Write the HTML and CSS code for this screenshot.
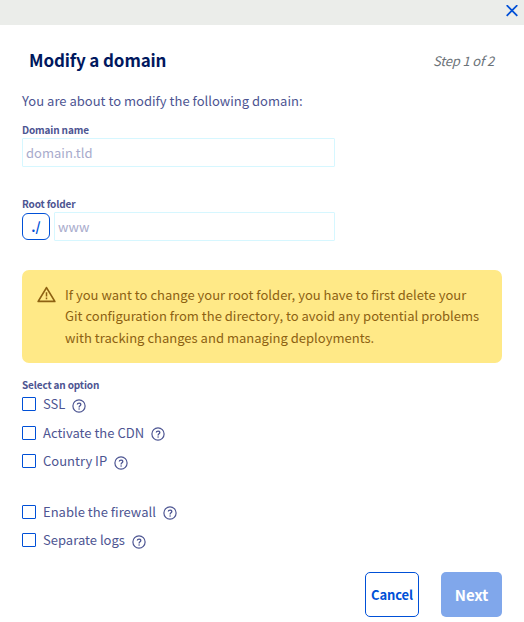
FILE: index.html
```html
<!DOCTYPE html>
<html lang="en">
<head>
<meta charset="utf-8">
<title>Modify a domain</title>
<link rel="stylesheet" href="styles.css">
</head>
<body>
<svg class="defs" width="0" height="0" aria-hidden="true">
  <symbol id="help" viewBox="0 0 14 14"><g fill="none" stroke="currentColor"><circle cx="7" cy="7" r="6.1" stroke-width="1.2"/><path d="M5.3 5.5C5.3 3.6 8.8 3.6 8.8 5.4C8.8 6.8 7.1 6.8 7.1 8.4" stroke-width="1.3"/></g><circle cx="7.1" cy="10" r=".8" fill="currentColor"/></symbol>
</svg>
<div class="topbar"><button class="close" aria-label="Close"><svg width="12" height="12" viewBox="0 0 12 12"><path d="M.7.2l10.6 10.6M11.3.2L.7 10.8" stroke="currentColor" stroke-width="1.8"/></svg></button></div>
<main class="content">
  <header class="heading"><h1>Modify a domain</h1><span class="step">Step 1 of 2</span></header>
  <p class="intro">You are about to modify the following domain:</p>
  <section class="field">
    <label class="label" for="domain">Domain name</label>
    <input id="domain" class="input" placeholder="domain.tld">
  </section>
  <section class="field folder">
    <label class="label" for="root">Root folder</label>
    <div class="group"><span class="prefix">./</span><input id="root" class="input" placeholder="www"></div>
  </section>
  <div class="alert">
    <svg class="warning" width="20" height="18" viewBox="0 0 20 18"><path d="M10.5 1.6L2.2 15.4H18.8Z" fill="none" stroke="currentColor" stroke-width="1.7" stroke-linejoin="round"/><path d="M10.5 6.2V10.4M10.5 11.6V13.2" stroke="currentColor" stroke-width="1.5"/></svg>
    <p>If you want to change your root folder, you have to first delete your<br>Git configuration from the directory, to avoid any potential problems<br>with tracking changes and managing deployments.</p>
  </div>
  <section class="options">
    <div class="label">Select an option</div>
    <label class="option"><input type="checkbox"><span>SSL</span><svg class="help"><use href="#help"/></svg></label>
    <label class="option"><input type="checkbox"><span>Activate the CDN</span><svg class="help"><use href="#help"/></svg></label>
    <label class="option"><input type="checkbox"><span>Country IP</span><svg class="help"><use href="#help"/></svg></label>
    <label class="option later"><input type="checkbox"><span>Enable the firewall</span><svg class="help"><use href="#help"/></svg></label>
    <label class="option"><input type="checkbox"><span>Separate logs</span><svg class="help"><use href="#help"/></svg></label>
  </section>
  <footer class="actions"><button class="cancel">Cancel</button><button class="next">Next</button></footer>
</main>
</body>
</html>
```
FILE: styles.css
```css
* { box-sizing: border-box; }
body {
  margin: 0;
  background: #fff;
  color: #4d5592;
  font: 13px/20px "Noto Sans CJK SC", "Noto Sans", sans-serif;
  letter-spacing: .015px;
  white-space: nowrap;
}
h1, p { margin: 0; }
button, input { font: inherit; letter-spacing: inherit; }
.defs { display: block; }
.topbar { display: flex; justify-content: flex-end; height: 25px; padding: 5px 6px 0 0; background: #ebedea; }
.close { height: 12px; padding: 0; border: 0; background: none; color: #0050d7; }
.close svg { display: block; }
.content { padding: 24px 22px 0; }
.heading { display: flex; justify-content: space-between; height: 41px; padding: 0 8px 0 7px; line-height: 24px; }
h1 { color: #00185e; font-size: 17px; font-weight: 700; line-height: 22px; letter-spacing: -.12px; }
.step { color: #6b7278; font-style: italic; letter-spacing: -.15px; }
.intro { height: 34px; line-height: 22px; }
.label { display: block; height: 14px; font-size: 10px; font-weight: 700; line-height: 12px; letter-spacing: -.15px; }
.field { height: 74px; }
.input { display: block; width: 313px; height: 29px; padding: 0 3px; border: 1px solid #d6f7ff; border-radius: 1px; outline: 0; background: #fff; color: #4d5592; }
.input::placeholder { color: #a8abcc; opacity: 1; }
.folder { height: 72px; }
.group { display: flex; gap: 4px; }
.group .input { width: 281px; }
.prefix { display: flex; align-items: center; justify-content: center; width: 28px; height: 27px; margin-top: 1px; border: 1px solid #0050d7; border-radius: 6px; color: #0050d7; font-weight: 700; }
.alert { display: flex; height: 93px; padding: 14px 15px 0; border-radius: 7px; background: #ffe987; color: #8d6112; line-height: 21.4px; }
.warning { flex: none; margin: 2px 8px 0 -1px; }
.alert p { margin-left: 1px; }
.options { height: 193px; padding-top: 16px; }
.options .label { height: 11px; }
.option { display: flex; align-items: center; height: 28.5px; }
.option input { appearance: none; width: 14px; height: 14px; margin: 0 7px 0 0; border: 1px solid #0050d7; border-radius: 1px; background: #fff; }
.help { width: 14px; height: 14px; margin: 3px 0 0 7px; }
.later { margin-top: 22px; }
.actions { display: flex; justify-content: flex-end; gap: 22px; margin-top: 16px; }
.actions button { height: 45px; padding: 1px 0 0; border-radius: 5px; font-weight: 700; }
.actions .cancel { width: 54px; border: 1px solid #0050d7; background: #fff; color: #0050d7; letter-spacing: -.15px; }
.actions .next { width: 61px; border: 0; background: #80a7eb; color: #fff; font-size: 15px; letter-spacing: -.15px; }
```
